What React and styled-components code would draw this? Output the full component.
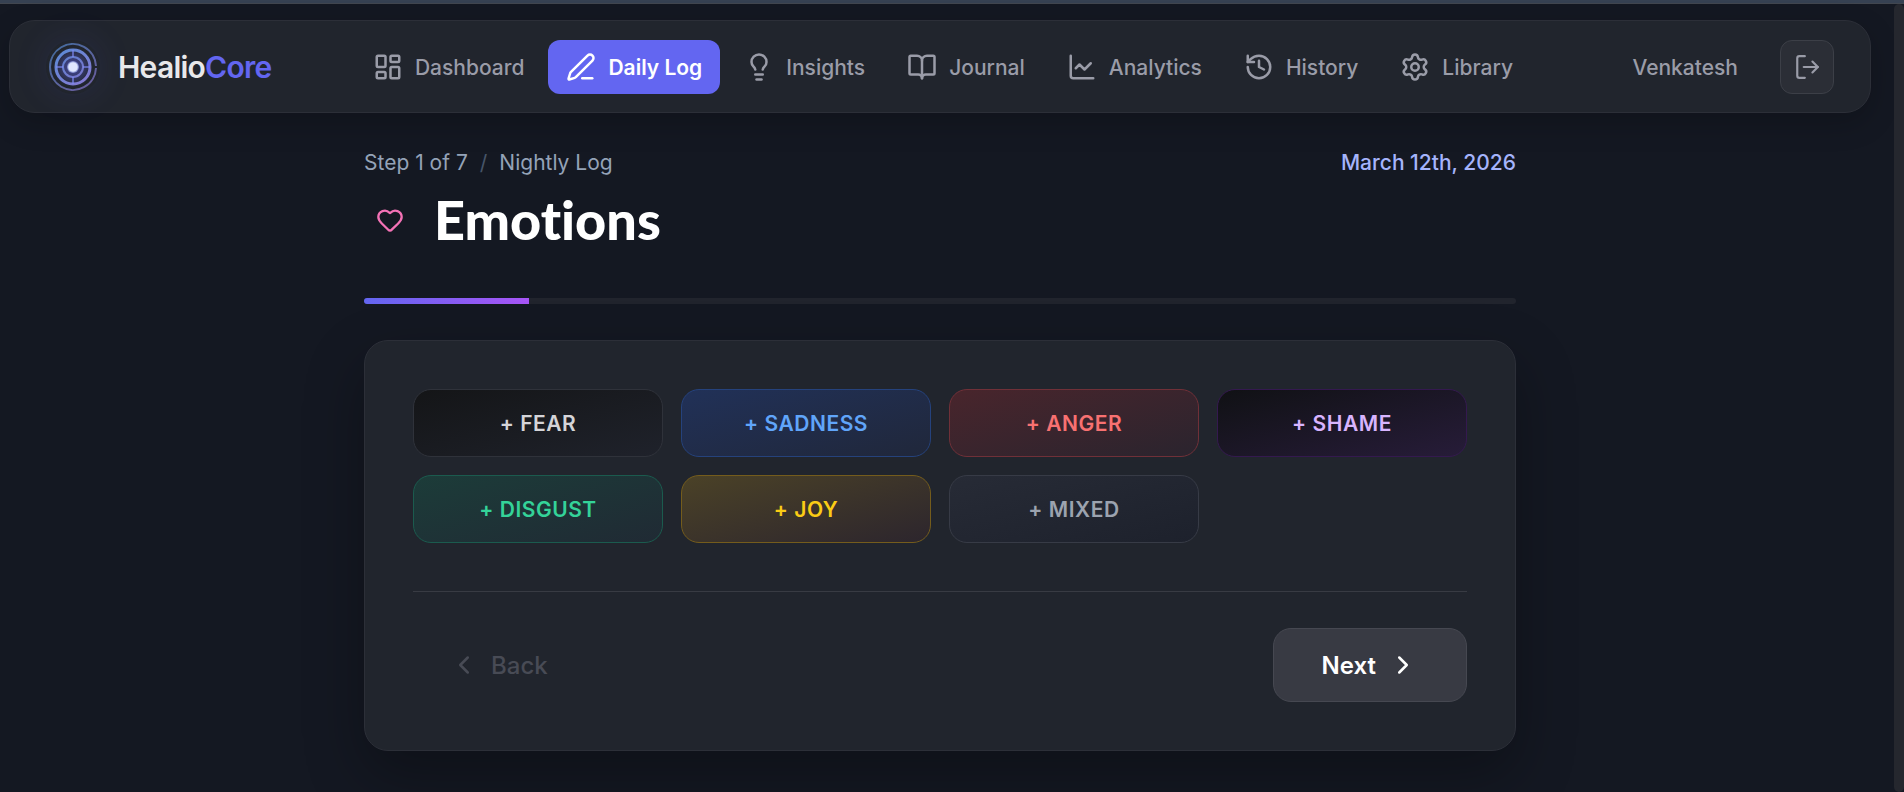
import React, { useState } from 'react'
import styled, { createGlobalStyle } from 'styled-components';
import {
    LayoutDashboard, PenLine, Lightbulb, BookOpen, ChartLine, History, Settings,
    Heart, ChevronLeft, ChevronRight
} from 'lucide-react';

const GlobalStyle = createGlobalStyle`
  * {
    box-sizing: border-box;
  }
  body {
    margin: 0;
    background: #141822;
    color: #ffffff;
    font-family: Inter, "Liberation Sans", sans-serif;
    overflow: hidden;
  }
  button {
    font-family: inherit;
    cursor: pointer;
  }
`;

const Page = styled.div`
  display: flex;
  flex-direction: column;
  height: 100vh;
  overflow: hidden;
`;

const TopEdge = styled.div`
  flex: none;
  height: 4px;
  background: #364152;
  border-bottom: 1px solid #41464f;
`;

const Body = styled.div`
  flex: 1;
  min-height: 0;
  display: flex;
`;

const Content = styled.div`
  flex: 1;
  min-width: 0;
  padding: 16px 23px 0 9px;
`;

const ScrollTrack = styled.div`
  flex: none;
  width: 10px;
  background: #25272e;
  border-radius: 5px;
`;

const NavBar = styled.header`
  display: flex;
  align-items: center;
  justify-content: space-between;
  padding: 19px 36px 18px;
  background: #21252d;
  border: 1px solid #2c2f38;
  border-radius: 26px;
  box-shadow: 0 10px 30px rgba(0, 0, 0, 0.2);
`;

const Brand = styled.a`
  display: flex;
  align-items: center;
  gap: 18px;
  color: #e8e8ea;
  font-size: 30px;
  font-weight: 600;
  line-height: 36px;
  letter-spacing: -0.025em;
  text-decoration: none;

  em {
    font-style: normal;
    color: #6366f1;
  }
`;

const LogoMark = styled.svg`
  width: 54px;
  height: 54px;
  border-radius: 50%;
  box-shadow: 0 0 36px rgba(99, 102, 241, 0.12);
`;

const NavLinks = styled.nav`
  display: flex;
  gap: 6px;
`;

const NavLink = styled.a`
  display: flex;
  align-items: center;
  gap: 12px;
  height: 54px;
  padding: 0 18px;
  border-radius: 12px;
  background: ${props => props.$active ? '#6366f1' : 'transparent'};
  color: ${props => props.$active ? '#ffffff' : '#9a9ca8'};
  font-size: 21px;
  font-weight: ${props => props.$active ? 600 : 500};
  text-decoration: none;
  white-space: nowrap;
`;

const UserArea = styled.div`
  display: flex;
  align-items: center;
  gap: 24px;
`;

const UserName = styled.span`
  padding: 0 18px;
  color: #9a9ca8;
  font-size: 21px;
  font-weight: 500;
`;

const LogoutButton = styled.button`
  display: flex;
  align-items: center;
  justify-content: center;
  width: 54px;
  height: 54px;
  padding: 0;
  background: #2b2e36;
  border: 1px solid #3c3f47;
  border-radius: 12px;
  color: #9a9ca8;
`;

const Main = styled.main`
  max-width: 1152px;
  margin: 0 auto;
  padding-top: 35px;
`;

const MetaRow = styled.div`
  display: flex;
  justify-content: space-between;
  font-size: 21px;
  line-height: 30px;
`;

const Crumbs = styled.div`
  display: flex;
  gap: 12px;
  color: #94a3b8;
`;

const Slash = styled.span`
  color: #475569;
`;

const LogDate = styled.time`
  color: #a5b4fc;
  font-weight: 500;
`;

const TitleRow = styled.div`
  display: flex;
  align-items: center;
  gap: 18px;
  margin-top: 9px;
  height: 66px;
`;

const TitleIcon = styled.span`
  display: flex;
  padding: 12px;
  color: #f472b6;
`;

const Title = styled.h1`
  margin: 0;
  font-family: "Lato Black", Lato, sans-serif;
  font-size: 54px;
  font-weight: 900;
  line-height: 66px;
  font-variant-ligatures: none;
`;

const Progress = styled.div`
  margin-top: 45px;
  height: 6px;
  border-radius: 3px;
  background: #21242d;
  overflow: hidden;
`;

const ProgressFill = styled.div`
  height: 100%;
  background: linear-gradient(90deg, #6366f1, #a855f7);
`;

const Card = styled.section`
  margin-top: 36px;
  padding: 48px;
  background: #21252d;
  border: 1px solid #2c2f38;
  border-radius: 24px;
  box-shadow: 0 24px 60px rgba(0, 0, 0, 0.3);
`;

const EmotionGrid = styled.div`
  display: grid;
  grid-template-columns: repeat(4, 1fr);
  gap: 18px;
`;

const EmotionButton = styled.button`
  height: 68px;
  border: 1px solid ${props => props.$tone.border};
  border-radius: 18px;
  background: linear-gradient(to bottom right, ${props => props.$tone.from}, ${props => props.$tone.to}) border-box;
  color: ${props => props.$tone.text};
  font-size: 21px;
  font-weight: 600;
  letter-spacing: 0.025em;
`;

const CardFooter = styled.div`
  display: flex;
  justify-content: space-between;
  margin-top: 48px;
  padding-top: 36px;
  border-top: 1px solid #383b43;
`;

const StepButton = styled.button`
  display: flex;
  align-items: center;
  gap: 12px;
  height: 74px;
  padding: 0 ${props => props.$primary ? 48 : 36}px;
  border: ${props => props.$primary ? '1px solid #464851' : 'none'};
  border-radius: 18px;
  background: ${props => props.$primary ? '#383a43' : 'transparent'};
  color: ${props => props.$primary ? '#ffffff' : '#484b55'};
  font-size: 24px;
  font-weight: ${props => props.$primary ? 600 : 500};
`;

const navItems = [
    { label: 'Dashboard', icon: LayoutDashboard },
    { label: 'Daily Log', icon: PenLine },
    { label: 'Insights', icon: Lightbulb },
    { label: 'Journal', icon: BookOpen },
    { label: 'Analytics', icon: ChartLine },
    { label: 'History', icon: History },
    { label: 'Library', icon: Settings },
]

const emotions = [
    { name: 'FEAR', tone: { from: '#141517', to: '#1f222b', border: '#2f323a', text: '#d4d4d8' } },
    { name: 'SADNESS', tone: { from: '#213158', to: '#20273a', border: '#25427c', text: '#60a5fa' } },
    { name: 'ANGER', tone: { from: '#49252c', to: '#2a242e', border: '#703038', text: '#f87171' } },
    { name: 'SHAME', tone: { from: '#101114', to: '#271c39', border: '#34194f', text: '#d8b4fe' } },
    { name: 'DISGUST', tone: { from: '#1c3c39', to: '#202a34', border: '#1b5b4e', text: '#34d399' } },
    { name: 'JOY', tone: { from: '#4b4227', to: '#2c252d', border: '#745c1c', text: '#facc15' } },
    { name: 'MIXED', tone: { from: '#272b36', to: '#1d212c', border: '#373b46', text: '#9ca3af' } },
]

function Logo() {
    return (
        <LogoMark viewBox="0 0 54 54" fill="none" aria-hidden="true">
            <defs>
                <linearGradient id="ring" x1="8" y1="4" x2="44" y2="50" gradientUnits="userSpaceOnUse">
                    <stop offset="0" stopColor="#60a5fa" />
                    <stop offset="1" stopColor="#a78bfa" />
                </linearGradient>
                <radialGradient id="halo">
                    <stop offset="0" stopColor="#6366f1" stopOpacity="0.6" />
                    <stop offset="1" stopColor="#6366f1" stopOpacity="0" />
                </radialGradient>
                <radialGradient id="core">
                    <stop offset="0.7" stopColor="#e0e7ff" />
                    <stop offset="1" stopColor="#a5b4fc" stopOpacity="0.5" />
                </radialGradient>
            </defs>
            <circle cx="27" cy="27" r="20" fill="url(#halo)" />
            <g stroke="url(#ring)">
                <path d="M50 26A23 23 0 1 0 50 28" strokeWidth="2" opacity="0.55" />
                <circle cx="27" cy="27" r="17" strokeWidth="3" opacity="0.8" />
                <circle cx="27" cy="27" r="10" strokeWidth="2" opacity="0.7" />
            </g>
            <path d="M27 10v7M27 37v7M10 27h7M37 27h7" stroke="#818cf8" strokeWidth="2" opacity="0.6" />
            <circle cx="27" cy="27" r="6" fill="url(#core)" />
        </LogoMark>
    )
}

function LogoutIcon() {
    return (
        <svg width="26" height="26" viewBox="0 0 24 24" fill="none" stroke="currentColor" strokeWidth="2" strokeLinecap="round" strokeLinejoin="round" aria-hidden="true">
            <path d="M10 22H5a2 2 0 0 1-2-2V4a2 2 0 0 1 2-2h5" />
            <path d="m17 17 5-5-5-5" />
            <path d="M22 12H9" />
        </svg>
    )
}

function App() {
    const [active, setActive] = useState('Daily Log')
    const step = 1
    const totalSteps = 7

    return (
        <Page>
            <GlobalStyle />
            <TopEdge />
            <Body>
                <Content>
                    <NavBar>
                        <Brand href="#home">
                            <Logo />
                            <span>Healio<em>Core</em></span>
                        </Brand>
                        <NavLinks>
                            {navItems.map(({ label, icon: Icon }) => (
                                <NavLink
                                    key={label}
                                    href={`#${label}`}
                                    $active={label === active}
                                    onClick={() => setActive(label)}
                                >
                                    <Icon size={30} strokeWidth={2} />
                                    {label}
                                </NavLink>
                            ))}
                        </NavLinks>
                        <UserArea>
                            <UserName>Venkatesh</UserName>
                            <LogoutButton aria-label="Log out"><LogoutIcon /></LogoutButton>
                        </UserArea>
                    </NavBar>

                    <Main>
                        <MetaRow>
                            <Crumbs>
                                <span>Step {step} of {totalSteps}</span>
                                <Slash>/</Slash>
                                <span>Nightly Log</span>
                            </Crumbs>
                            <LogDate dateTime="2026-03-12">March 12th, 2026</LogDate>
                        </MetaRow>
                        <TitleRow>
                            <TitleIcon><Heart size={28} /></TitleIcon>
                            <Title>Emotions</Title>
                        </TitleRow>
                        <Progress>
                            <ProgressFill style={{ width: `${step / totalSteps * 100}%` }} />
                        </Progress>

                        <Card>
                            <EmotionGrid>
                                {emotions.map(emotion => (
                                    <EmotionButton key={emotion.name} $tone={emotion.tone}>
                                        + {emotion.name}
                                    </EmotionButton>
                                ))}
                            </EmotionGrid>
                            <CardFooter>
                                <StepButton disabled={step === 1}>
                                    <ChevronLeft size={30} />
                                    Back
                                </StepButton>
                                <StepButton $primary>
                                    Next
                                    <ChevronRight size={30} />
                                </StepButton>
                            </CardFooter>
                        </Card>
                    </Main>
                </Content>
                <ScrollTrack />
            </Body>
        </Page>
    )
}

export default App
